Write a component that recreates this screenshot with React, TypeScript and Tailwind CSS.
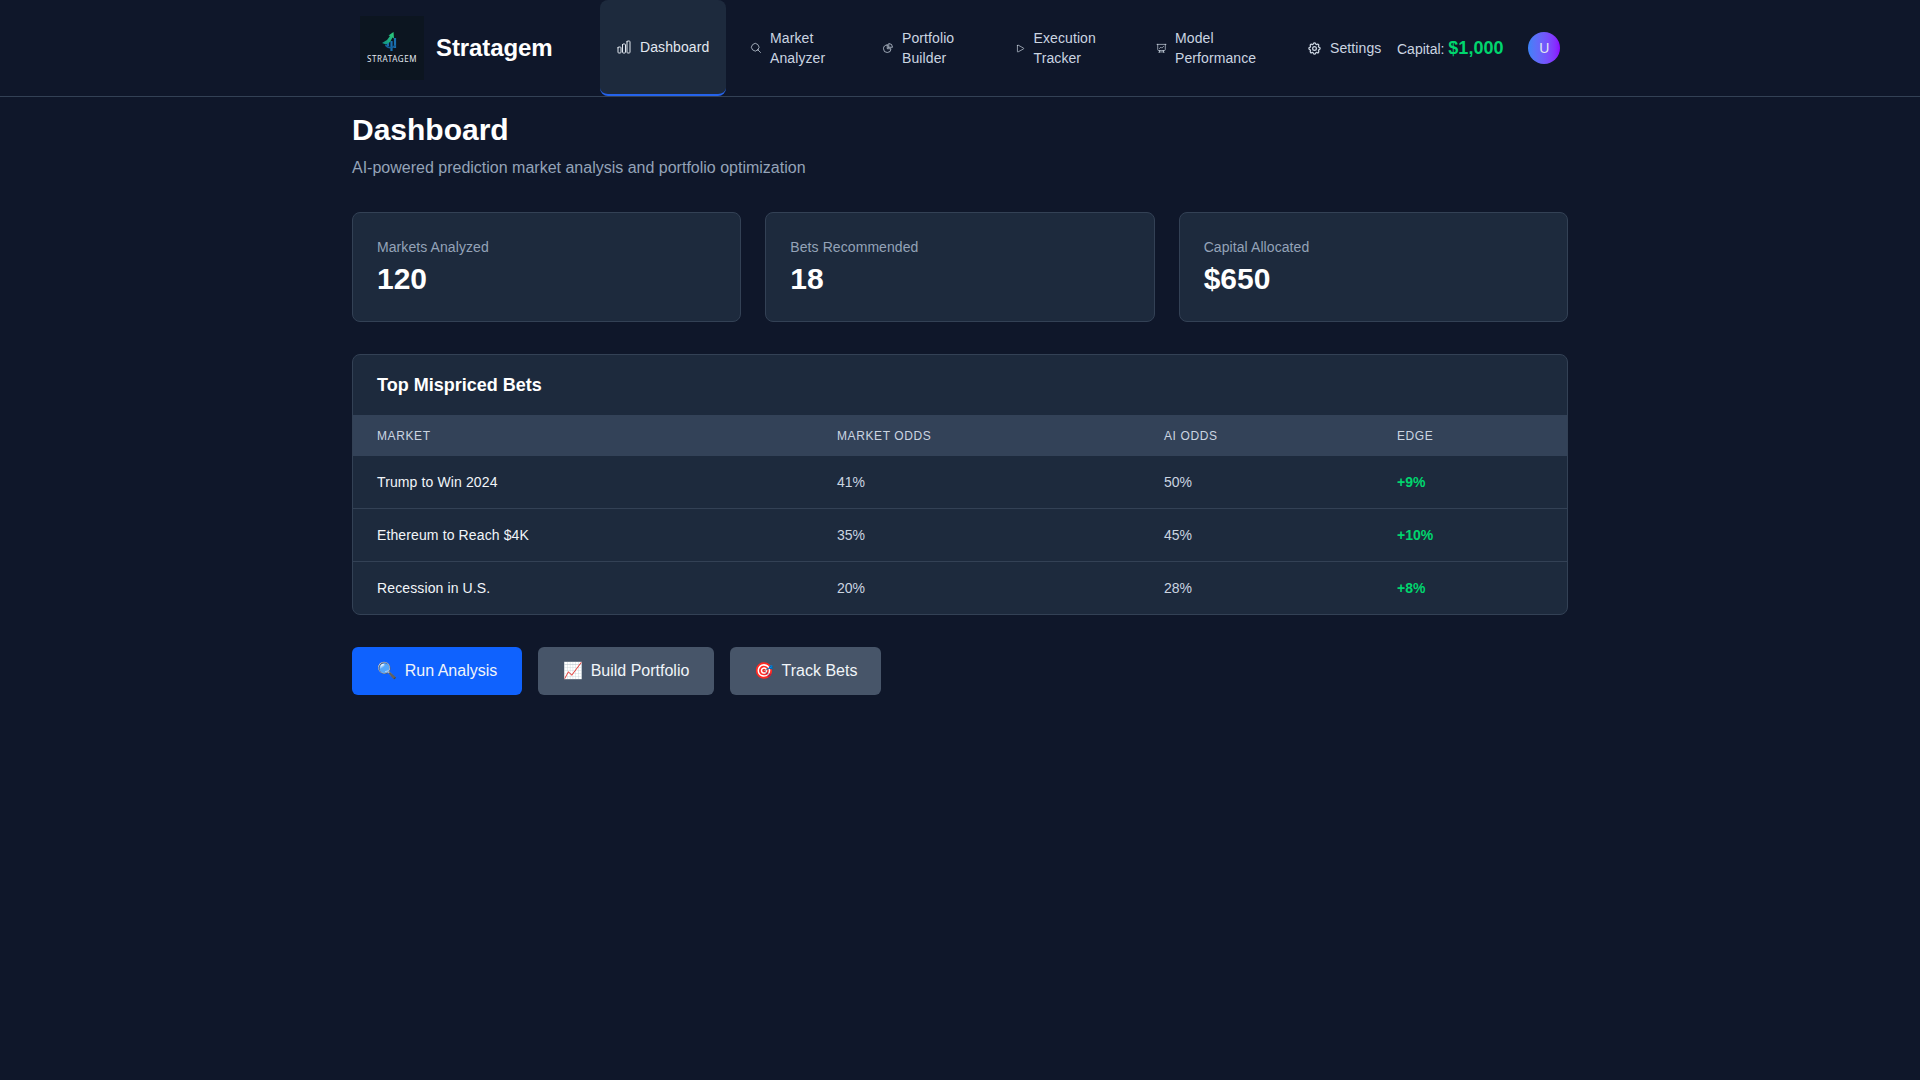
import {
  HiOutlineChartBar,
  HiOutlineMagnifyingGlass,
  HiOutlineChartPie,
  HiOutlinePlay,
  HiOutlinePresentationChartLine,
} from "react-icons/hi2";
import { HiOutlineCog } from "react-icons/hi";

const navItems = [
  { label: "Dashboard", icon: HiOutlineChartBar, width: "w-[126px]", iconSize: "w-4 h-4", active: true },
  { label: "Market Analyzer", icon: HiOutlineMagnifyingGlass, width: "w-[124px]", iconSize: "w-3 h-3" },
  { label: "Portfolio Builder", icon: HiOutlineChartPie, width: "w-[124.5px]", iconSize: "w-3 h-3" },
  { label: "Execution Tracker", icon: HiOutlinePlay, width: "w-[133.5px]", iconSize: "w-[11px] h-[11px]" },
  { label: "Model Performance", icon: HiOutlinePresentationChartLine, width: "w-[143px]", iconSize: "w-[11px] h-[11px]" },
  { label: "Settings", icon: HiOutlineCog, width: "w-[106px]", iconSize: "w-[15px] h-[15px]" },
];

const stats = [
  { label: "Markets Analyzed", value: "120" },
  { label: "Bets Recommended", value: "18" },
  { label: "Capital Allocated", value: "$650" },
];

const bets = [
  { market: "Trump to Win 2024", odds: "41%", ai: "50%", edge: "+9%" },
  { market: "Ethereum to Reach $4K", odds: "35%", ai: "45%", edge: "+10%" },
  { market: "Recession in U.S.", odds: "20%", ai: "28%", edge: "+8%" },
];

const actions = [
  { icon: "🔍", label: "Run Analysis", className: "bg-[#0f62fe] w-[170px]" },
  { icon: "📈", label: "Build Portfolio", className: "bg-[#475569] w-[176px]" },
  { icon: "🎯", label: "Track Bets", className: "bg-[#475569] w-[151px]" },
];

function Logo() {
  return (
    <div className="w-16 h-16 bg-[#0c1520] flex flex-col items-center shrink-0 pt-4">
      <svg viewBox="0 0 16 20" className="w-4 h-5 -ml-1">
        <defs>
          <linearGradient id="logoGreen" x1="0" y1="1" x2="1" y2="0">
            <stop offset="0" stopColor="#0f8f86" />
            <stop offset="1" stopColor="#2fd07a" />
          </linearGradient>
        </defs>
        <path d="M6 10v4M9.5 9v10M13 6v10" stroke="#1a6fb0" strokeWidth="2.2" fill="none" />
        <path d="M3.5 13a6 6 0 0 0 10 0" stroke="#14609c" strokeWidth="1.6" fill="none" />
        <path d="M0 11L5 8 8 4 6.5 3.5 11.5 0 12 6.5 10.5 5.5 8 10 4 12.5z" fill="url(#logoGreen)" />
      </svg>
      <span className="text-[8px] leading-[10px] font-['Noto_Sans',sans-serif] tracking-[0.6px] text-[#e2e8f0] mt-[2px]">STRATAGEM</span>
    </div>
  );
}

export default function App() {
  return (
    <div className="min-h-[1080px] bg-[#0f172a] text-white font-['Liberation_Sans',Arial,sans-serif]">
      <header className="border-b border-[#334155]">
        <div className="max-w-7xl mx-auto px-10 h-24 flex items-center">
          <Logo />
          <span className="ml-3 text-2xl font-bold w-[164px] shrink-0 tracking-[-0.1px]">Stratagem</span>
          <nav className="flex gap-2 h-24 shrink-0">
            {navItems.map((item) => {
              const Icon = item.icon;
              return (
                <a
                  key={item.label}
                  className={`${item.width} h-24 px-4 flex items-center gap-2 text-sm leading-5 tracking-[0.1px] rounded-lg ${
                    item.active
                      ? "bg-[#1d2a3d] border-b-2 border-[#2563eb] text-[#e2e8f0]"
                      : "text-[#cbd5e1]"
                  }`}
                >
                  <Icon className={`${item.iconSize} shrink-0`} />
                  <span>{item.label}</span>
                </a>
              );
            })}
          </nav>
          <div className="text-sm text-[#cbd5e1] shrink-0 whitespace-nowrap">
            Capital: <span className="text-lg font-bold text-[#00d66e]">$1,000</span>
          </div>
          <div className="ml-[25px] w-8 h-8 rounded-full bg-gradient-to-r from-[#3b82f6] to-[#8b00ff] flex items-center justify-center text-sm text-[#e2e8f0] shrink-0">
            U
          </div>
        </div>
      </header>

      <main className="max-w-7xl mx-auto px-8 pt-[15px]">
        <h1 className="text-3xl font-bold leading-9">Dashboard</h1>
        <p className="mt-2 text-base text-[#94a3b8]">AI-powered prediction market analysis and portfolio optimization</p>

        <div className="mt-8 grid grid-cols-3 gap-6">
          {stats.map((s) => (
            <div key={s.label} className="bg-[#1d2a3d] border border-[#334155] rounded-lg p-6 h-[110px]">
              <div className="text-sm tracking-[0.08px] text-[#94a3b8] leading-5">{s.label}</div>
              <div className="text-3xl font-bold leading-9 mt-1">{s.value}</div>
            </div>
          ))}
        </div>

        <div className="mt-8 bg-[#1d2a3d] border border-[#334155] rounded-lg overflow-hidden">
          <h2 className="px-6 h-[60px] flex items-center text-lg font-bold">Top Mispriced Bets</h2>
          <table className="w-full text-sm table-fixed">
            <thead className="bg-[#334258] text-[#cbd5e1]">
              <tr className="h-[41px] text-xs text-left uppercase tracking-wider">
                <th className="px-6 font-normal w-[460px]">Market</th>
                <th className="px-6 font-normal w-[327px]">Market Odds</th>
                <th className="px-6 font-normal w-[233px]">AI Odds</th>
                <th className="px-6 font-normal">Edge</th>
              </tr>
            </thead>
            <tbody>
              {bets.map((b, i) => (
                <tr key={b.market} className={i > 0 ? "h-[53px] border-t border-[#334155]" : "h-[52px]"}>
                  <td className="px-6 text-[#f1f5f9] tracking-[0.12px]">{b.market}</td>
                  <td className="px-6 text-[#cbd5e1]">{b.odds}</td>
                  <td className="px-6 text-[#cbd5e1]">{b.ai}</td>
                  <td className="px-6 font-bold text-[#00d66e]">{b.edge}</td>
                </tr>
              ))}
            </tbody>
          </table>
        </div>

        <div className="mt-8 flex gap-4">
          {actions.map((a) => (
            <button key={a.label} className={`${a.className} h-12 rounded-md flex items-center justify-center gap-2 text-base text-[#f1f5f9]`}>
              <span>{a.icon}</span>
              {a.label}
            </button>
          ))}
        </div>
      </main>
    </div>
  );
}
